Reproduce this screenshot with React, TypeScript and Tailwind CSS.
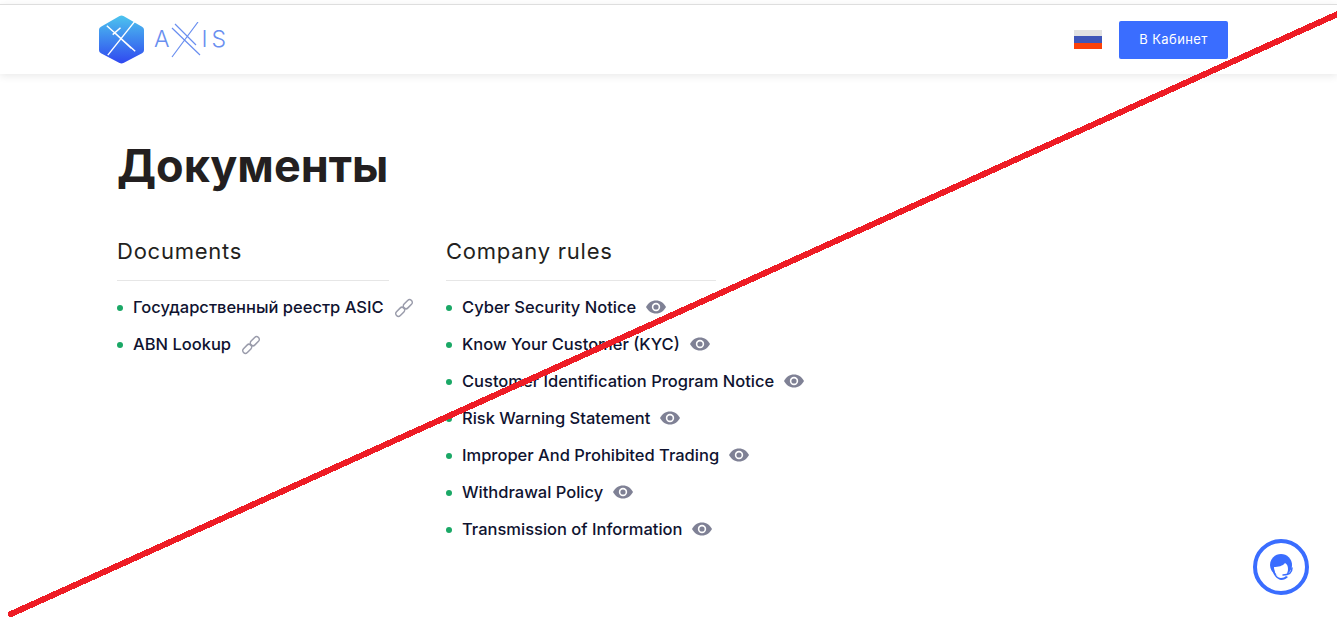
import React from "react";

const documents = ["Государственный реестр ASIC", "ABN Lookup"];
const rules = [
  "Cyber Security Notice",
  "Know Your Customer (KYC)",
  "Customer Identification Program Notice",
  "Risk Warning Statement",
  "Improper And Prohibited Trading",
  "Withdrawal Policy",
  "Transmission of Information",
];

const LinkIcon = () => (
  <svg width="20" height="20" viewBox="0 0 20 20" fill="none" stroke="#9a9cab" strokeWidth="1.5" className="ml-[10px] shrink-0">
    <rect x="-5.2" y="-2.7" width="10.4" height="5.4" rx="2.7" transform="translate(6.2 13.8) rotate(-45)" />
    <rect x="-5.2" y="-2.7" width="10.4" height="5.4" rx="2.7" transform="translate(13.8 6.2) rotate(-45)" />
  </svg>
);

const EyeIcon = () => (
  <svg width="20" height="14" viewBox="0 0 20 14" className="ml-[10px] mb-[1px] shrink-0">
    <path fill="#7f8195" d="M10 0.5C5.5 0.5 1.9 3.2 0 7c1.9 3.8 5.5 6.5 10 6.5s8.1-2.7 10-6.5C18.1 3.2 14.500 0.500 10 0.500z" />
    <circle cx="10" cy="7" r="4.2" fill="#fff" />
    <circle cx="10" cy="7" r="2.6" fill="#7f8195" />
  </svg>
);

const Column = ({ title, items, icon, width }: { title: string; items: string[]; icon: React.ReactNode; width: string }) => (
  <div className={width}>
    <h2 className="text-[22px] leading-[30px] font-normal text-[#231f20] tracking-[0.75px] pb-[14px] border-b border-[#e6e6e6] w-full whitespace-nowrap">{title}</h2>
    <ul className="mt-[8px]">
      {items.map((item) => (
        <li key={item} className="flex items-center h-[37px] whitespace-nowrap text-[16.500px] font-medium text-[#0f1330]">
          <span className="w-[6px] h-[6px] rounded-full bg-[#1aa866] mr-[10px] shrink-0" />
          {item}
          {icon}
        </li>
      ))}
    </ul>
  </div>
);

export default function App() {
  return (
    <div className="relative h-[625px] overflow-hidden bg-white font-['Inter',sans-serif]">
      <header className="mt-[4px] h-[70px] border-t border-[#dedede] bg-white shadow-[0_2px_8px_rgba(0,0,0,0.09)] flex items-center justify-between pl-[99px] pr-[109px] absolute inset-x-0 top-0">
        <div className="flex items-center">
          <svg width="45" height="49" viewBox="0 0 46 50">
            <defs>
              <linearGradient id="hex" x1="0" y1="0" x2="0" y2="1">
                <stop offset="0" stopColor="#4cc4ee" />
                <stop offset="1" stopColor="#3048f0" />
              </linearGradient>
            </defs>
            <path fill="url(#hex)" d="M23 0.500 Q24 0.500 25 1 L44 12 Q46 13 46 15 L46 36 Q46 38 44 39 L25 49 Q23 50 21 49 L2 39 Q0 38 0 36 L0 15 Q0 13 2 12 L21 1 Q22 0.500 23 0.500z" />
            <path stroke="#fff" strokeWidth="1.500" fill="none" d="M8 11 L37 37 M14 20 L22 13 M37 6 L9 41 M17 19 L33 34" />
          </svg>
          <div className="flex items-center ml-[10px] text-[#6a8ff0] text-[23px] font-light">
            <span>A</span>
            <svg width="30" height="36" viewBox="0 0 30 36" className="ml-[1px]">
              <path stroke="#6a8ff0" strokeWidth="1.200" fill="none" d="M1 6 L29 33 M4 2 L25 23 M27 0 L1 35" />
            </svg>
            <span className="ml-[1px]">I</span>
            <span className="ml-[4px]">S</span>
          </div>
        </div>
        <div className="flex items-center">
          <div className="w-[28px] h-[19px] flex flex-col mr-[17px]">
            <div className="h-[6px] bg-[#e2e2e2]" />
            <div className="h-[7px] bg-[#3f56b8]" />
            <div className="h-[6px] bg-[#fb4109]" />
          </div>
          <button className="w-[109px] h-[38px] rounded-[2px] bg-[#3a6dff] text-white text-[13px] font-normal tracking-[0.4px]">В Кабинет</button>
        </div>
      </header>

      <main className="pl-[117px] pt-[136px]">
        <h1 className="text-[45px] leading-[60px] font-bold text-[#231f20]">Документы</h1>
        <div className="flex gap-[57px] mt-[40px]">
          <Column title="Documents" items={documents} icon={<LinkIcon />} width="w-[272px]" />
          <Column title="Company rules" items={rules} icon={<EyeIcon />} width="w-[270px]" />
        </div>
      </main>

      <div className="absolute left-[1253px] top-[539px] w-[56px] h-[56px] rounded-full border-[4px] border-[#3a6dff] flex items-center justify-center">
        <svg width="28" height="28" viewBox="0 0 28 28">
          <circle cx="14" cy="12" r="11" fill="#3a6dff" />
          <path fill="#fff" d="M7 14c4 0 9-1 11-4 2 1 3 3 3 6 0 5-3 8-7 8s-7-4-7-10z" />
          <path fill="#3a6dff" d="M5 16c1 5 4 10 9 11 3 0 5-1 7-3l-2-1c-1 1-3 2-5 2-4 0-6-4-7-9z" />
          <path stroke="#3a6dff" strokeWidth="1.500" fill="none" strokeLinecap="round" d="M25 15c0 4-3 7-9 7" />
        </svg>
      </div>

      <svg className="absolute inset-0 pointer-events-none" width="1337" height="625" shapeRendering="crispEdges">
        <line x1="11" y1="614" x2="1340" y2="13" stroke="#ee1c25" strokeWidth="6" strokeLinecap="round" />
      </svg>
    </div>
  );
}
